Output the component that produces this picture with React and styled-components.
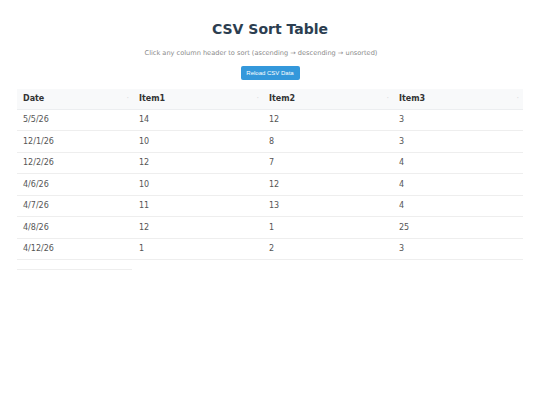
import React, { useState } from 'react'
import styled, { createGlobalStyle } from 'styled-components'

const GlobalStyle = createGlobalStyle`
  * { box-sizing: border-box; }
  body {
    margin: 0;
    background: #fff;
    font-family: "DejaVu Sans", Verdana, sans-serif;
    color: #333;
  }
`

const rows = [
  ['5/5/26', 14, 12, 3],
  ['12/1/26', 10, 8, 3],
  ['12/2/26', 12, 7, 4],
  ['4/6/26', 10, 12, 4],
  ['4/7/26', 11, 13, 4],
  ['4/8/26', 12, 1, 25],
  ['4/12/26', 1, 2, 3],
]

const headers = ['Date', 'Item1', 'Item2', 'Item3']

const App = () => {
  const [data] = useState(rows)
  return (
    <Page>
      <GlobalStyle />
      <Title>CSV Sort Table</Title>
      <Hint>Click any column header to sort (ascending → descending → unsorted)</Hint>
      <ReloadButton>Reload CSV Data</ReloadButton>
      <Table>
        <colgroup>
          <col style={{ width: 116 }} />
          <col style={{ width: 130 }} />
          <col style={{ width: 130 }} />
          <col style={{ width: 130 }} />
        </colgroup>
        <thead>
          <tr>
            {headers.map((h) => (
              <Th key={h}>
                {h}
                <SortMark>·</SortMark>
              </Th>
            ))}
          </tr>
        </thead>
        <tbody>
          {data.map((r) => (
            <tr key={r[0]}>
              {r.map((c, i) => (
                <Td key={i}>{c}</Td>
              ))}
            </tr>
          ))}
        </tbody>
      </Table>
      <Footer />
    </Page>
  )
}

export default App

const Page = styled.div`
  padding: 0 17px;
  display: flex;
  flex-direction: column;
  align-items: center;
`

const Title = styled.h1`
  margin: 21px 0 0;
  font-size: 14px;
  line-height: 17px;
  font-weight: bold;
  color: #2c3e50;
`

const Hint = styled.p`
  margin: 11px 0 0;
  padding-right: 18px;
  font-size: 6.6px;
  line-height: 8px;
  color: #8a8a8a;
`

const ReloadButton = styled.button`
  margin-top: 9px;
  width: 59px;
  height: 14px;
  padding: 0;
  border: none;
  border-radius: 2px;
  background: #3498db;
  color: #fff;
  font-family: "Liberation Sans", Arial, sans-serif;
  font-size: 6px;
  cursor: pointer;
`

const Table = styled.table`
  margin-top: 9px;
  width: 506px;
  border-collapse: collapse;
  table-layout: fixed;
  font-size: 8px;
`

const Th = styled.th`
  position: relative;
  height: 20px;
  padding: 0 6px;
  text-align: left;
  font-weight: bold;
  color: #333;
  background: #f8f9fa;
  border-bottom: 1px solid #eceef0;
`

const SortMark = styled.span`
  position: absolute;
  right: 4px;
  top: 5px;
  font-size: 8px;
  font-weight: normal;
  color: #d8dadc;
`

const Td = styled.td`
  height: 21.5px;
  padding: 0 6px;
  color: #555;
  border-bottom: 1px solid #eee;
`

const Footer = styled.div`
  align-self: flex-start;
  margin-top: 9px;
  width: 115px;
  border-top: 1px solid #eee;
`
